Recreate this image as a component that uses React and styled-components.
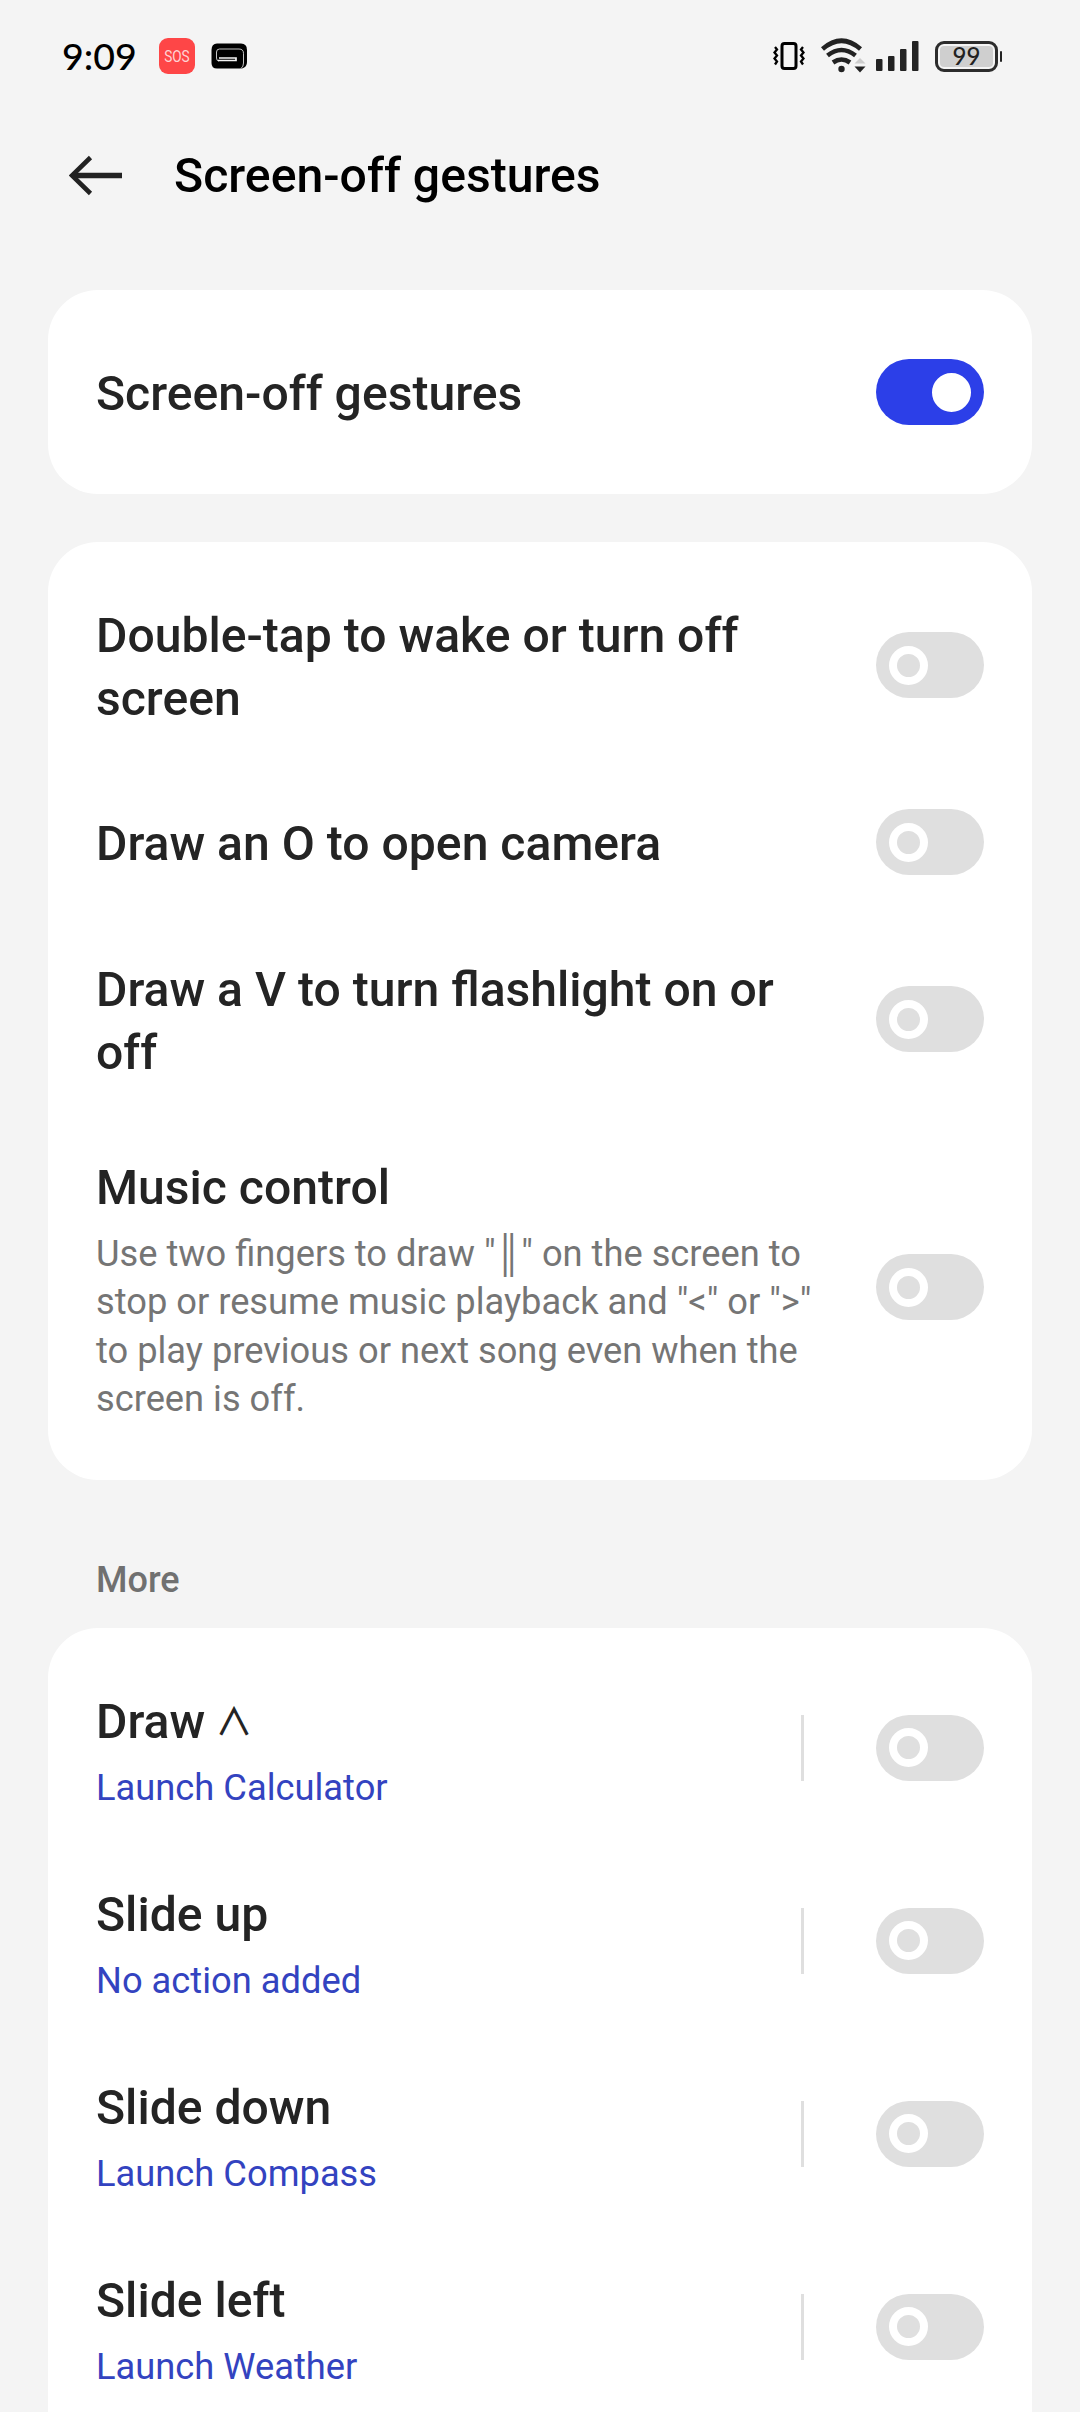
import React, { useState } from "react";
import styled, { createGlobalStyle } from "styled-components";

const GlobalStyle = createGlobalStyle`
  body {
    margin: 0;
    background-color: #f4f4f4;
    font-family: Roboto, "Noto Sans", sans-serif;
  }
`;

const Screen = styled.div`
  display: flex;
  flex-direction: column;
  width: 1080px;
  height: 2412px;
  overflow: hidden;
  background-color: #f4f4f4;
`;

const StatusBar = styled.div`
  display: flex;
  align-items: center;
  flex-shrink: 0;
  box-sizing: border-box;
  height: 112px;
  padding: 0 78px 0 62px;
`;

const Clock = styled.div`
  width: 97px;
  margin-top: -2px;
  font-family: Lato, sans-serif;
  font-size: 37.5px;
  font-weight: 500;
  color: #000;
`;

const SosBadge = styled.div`
  display: flex;
  align-items: center;
  justify-content: center;
  width: 36px;
  height: 36px;
  margin-right: 16px;
  border-radius: 9px;
  background-color: #fe4647;
`;

const SosText = styled.span`
  font-size: 17px;
  color: #ffd4d4;
  transform: scaleX(0.8);
`;

const StatusIcons = styled.div`
  display: flex;
  align-items: center;
  margin-left: auto;
`;

const Header = styled.header`
  display: flex;
  align-items: center;
  flex-shrink: 0;
  height: 127px;
  padding-left: 69px;
  margin-bottom: 51px;
`;

const BackButton = styled.button`
  display: flex;
  width: 105px;
  padding: 0;
  border: none;
  background: none;
  cursor: pointer;
`;

const PageTitle = styled.h1`
  margin: 0;
  font-size: 48.15px;
  font-weight: 500;
  color: #000;
`;

const Card = styled.section`
  box-sizing: border-box;
  flex-shrink: 0;
  margin: 0 48px 48px;
  padding: ${(props) => props.$padding};
  border-radius: 50px;
  background-color: #fff;
`;

const SectionLabel = styled.h2`
  flex-shrink: 0;
  margin: 31px 96px 26px;
  font-size: 36px;
  font-weight: 500;
  line-height: 43px;
  color: #707070;
`;

const Row = styled.div`
  display: flex;
  align-items: center;
  box-sizing: border-box;
  height: ${(props) => props.$height}px;
  padding: 0 48px;
`;

const RowText = styled.div`
  width: ${(props) => (props.$wide ? 730 : 700)}px;
  padding-top: ${(props) => props.$top || 4}px;
`;

const RowTitle = styled.div`
  font-size: 48.1px;
  font-weight: 500;
  line-height: 63px;
  color: #242424;
`;

const RowDescription = styled.div`
  margin-top: 11px;
  font-size: 36.25px;
  line-height: 48.3px;
  color: #757575;
`;

const RowAction = styled.div`
  margin-top: 11px;
  font-size: 36.3px;
  line-height: 48px;
  color: #3343c0;
`;

const GestureSign = styled.span`
  margin-left: -2px;
  font-family: "Noto Sans CJK SC", sans-serif;
  font-size: 37.5px;
  font-weight: 500;
  line-height: 1;
  vertical-align: 3px;
`;

const Divider = styled.div`
  width: 3px;
  height: 66px;
  margin-left: auto;
  margin-right: 72px;
  background-color: #dfdfdf;
`;

const Track = styled.button`
  display: flex;
  align-items: center;
  justify-content: ${(props) => (props.$on ? "flex-end" : "flex-start")};
  box-sizing: border-box;
  flex-shrink: 0;
  width: 108px;
  height: 66px;
  margin-left: ${(props) => (props.$afterDivider ? "0" : "auto")};
  padding: 0 13px;
  border: none;
  border-radius: 33px;
  background-color: ${(props) => (props.$on ? "#2c3fe8" : "#dfdfdf")};
  cursor: pointer;
`;

const Thumb = styled.span`
  box-sizing: border-box;
  width: 39px;
  height: 39px;
  border: 8px solid #fff;
  border-radius: 50%;
  background-color: ${(props) => (props.$on ? "#fff" : "#dfdfdf")};
`;

const toggles = [
  { id: "wake", title: "Double-tap to wake or turn off screen", height: 208 },
  { id: "camera", title: "Draw an O to open camera", height: 146, top: 3 },
  { id: "flashlight", title: "Draw a V to turn flashlight on or off", height: 208 },
  {
    id: "music",
    title: "Music control",
    description:
      'Use two fingers to draw "║" on the screen to stop or resume music playback and "<" or ">" to play previous or next song even when the screen is off.',
    height: 328,
    top: 5,
  },
];

const gestures = [
  { id: "draw", title: "Draw", sign: "∧", action: "Launch Calculator" },
  { id: "up", title: "Slide up", action: "No action added" },
  { id: "down", title: "Slide down", action: "Launch Compass" },
  { id: "left", title: "Slide left", action: "Launch Weather" },
];

const BackIcon = () => (
  <svg width="54" height="42" viewBox="0 0 54 42" fill="none" stroke="#222">
    <path d="M3 20.500 H53" strokeWidth="5.400" />
    <path d="M21.500 2.500 L3 20.500 L21.500 38.500" strokeWidth="4.600" />
  </svg>
);

const GameIcon = () => (
  <svg width="37" height="26" viewBox="0 0 37 26" fill="none" stroke="#f4f4f4">
    <path
      d="M6 0.500 H30 Q36 0.500 36 7 V19 Q36 24 31 25.500 H6 Q0.500 25.500 0.500 20 V7 Q0.500 0.500 6 0.500 Z"
      fill="#000"
      stroke="none"
    />
    <path
      d="M30 25.500 Q32.500 23.500 32.500 20 V10.500 Q32.500 6 28 6 H8.500 Q5.500 6 5.500 9 V15 Q5.500 18 8 18"
      strokeWidth="1"
      opacity="0.8"
    />
    <path d="M7 17.500 H25 V15 H8" strokeWidth="1.700" />
  </svg>
);

const VibrateSvg = styled.svg`
  margin-right: 16px;
`;

const VibrateIcon = () => (
  <VibrateSvg width="32" height="30" viewBox="0 0 32 30" fill="none" stroke="#000">
    <rect x="9" y="2.500" width="14" height="25" rx="2.500" strokeWidth="3" />
    <path
      d="M2 6 L4 8.500 L1.500 11.500 L4 14.500 L1.500 17.500 L4 20.500 L2 23.500"
      strokeWidth="2.300"
    />
    <path
      d="M30 6 L28 8.500 L30.500 11.500 L28 14.500 L30.500 17.500 L28 20.500 L30 23.500"
      strokeWidth="2.300"
    />
  </VibrateSvg>
);

const WifiSvg = styled.svg`
  margin-right: 9px;
`;

const WifiIcon = () => (
  <WifiSvg width="46" height="36" viewBox="0 0 46 36" fill="none">
    <g stroke="#222" strokeWidth="4.600">
      <path d="M1.500 11 Q20.500 -5.500 39.500 11" />
      <path d="M6.500 17.500 Q20.500 6.500 34.500 17.500" />
      <path d="M12 24.500 Q20.500 18.500 29 24.500" />
    </g>
    <circle cx="20.500" cy="31" r="3.200" fill="#222" />
    <path d="M33.500 25.500 L39 20 L44.500 25.500 Z" fill="#ccc" />
    <path d="M33.500 28.500 H44.500 L39 34.500 Z" fill="#222" />
  </WifiSvg>
);

const SignalIcon = () => (
  <svg width="43" height="32" viewBox="0 0 43 32" fill="#222">
    <rect x="0" y="19" width="6.500" height="12" rx="1" />
    <rect x="12" y="16" width="6.500" height="15" rx="1" />
    <rect x="24" y="9" width="6.500" height="22" rx="1" />
    <rect x="36" y="1" width="6.500" height="30" rx="1" />
  </svg>
);

const Battery = styled.div`
  display: flex;
  align-items: center;
  margin-left: 16px;
`;

const BatteryBody = styled.div`
  display: flex;
  box-sizing: border-box;
  width: 63px;
  height: 31px;
  padding: 2px;
  border: 3px solid #2c2c2c;
  border-radius: 9px;
`;

const BatteryLevel = styled.div`
  display: flex;
  align-items: center;
  justify-content: center;
  flex: 1;
  border-radius: 4px;
  background-color: #cfcfcf;
  font-family: Lato, sans-serif;
  font-size: 24px;
  font-weight: 500;
  line-height: 20px;
  color: #222;
`;

const BatteryTip = styled.div`
  width: 2px;
  height: 11px;
  margin-left: 2px;
  border-radius: 1px;
  background-color: #222;
`;

const Switch = ({ on, onToggle, afterDivider }) => (
  <Track
    type="button"
    role="switch"
    aria-checked={on}
    $on={on}
    $afterDivider={afterDivider}
    onClick={onToggle}
  >
    <Thumb $on={on} />
  </Track>
);

const App = () => {
  const [enabled, setEnabled] = useState({ main: true });

  const toggleHandler = (id) => {
    setEnabled({ ...enabled, [id]: !enabled[id] });
  };

  return (
    <>
      <GlobalStyle />
      <Screen>
        <StatusBar>
          <Clock>9:09</Clock>
          <SosBadge>
            <SosText>SOS</SosText>
          </SosBadge>
          <GameIcon />
          <StatusIcons>
            <VibrateIcon />
            <WifiIcon />
            <SignalIcon />
            <Battery>
              <BatteryBody>
                <BatteryLevel>99</BatteryLevel>
              </BatteryBody>
              <BatteryTip />
            </Battery>
          </StatusIcons>
        </StatusBar>

        <Header>
          <BackButton type="button" aria-label="Back">
            <BackIcon />
          </BackButton>
          <PageTitle>Screen-off gestures</PageTitle>
        </Header>

        <Card $padding="29px 0">
          <Row $height={146}>
            <RowText $top={3}>
              <RowTitle>Screen-off gestures</RowTitle>
            </RowText>
            <Switch on={!!enabled.main} onToggle={() => toggleHandler("main")} />
          </Row>
        </Card>

        <Card $padding="19px 0 29px">
          {toggles.map((item) => (
            <Row key={item.id} $height={item.height}>
              <RowText $wide={!!item.description} $top={item.top}>
                <RowTitle>{item.title}</RowTitle>
                {item.description && (
                  <RowDescription>{item.description}</RowDescription>
                )}
              </RowText>
              <Switch
                on={!!enabled[item.id]}
                onToggle={() => toggleHandler(item.id)}
              />
            </Row>
          ))}
        </Card>

        <SectionLabel>More</SectionLabel>

        {/* the list runs on past the bottom edge of the screen */}
        <Card $padding="23px 0 120px">
          {gestures.map((item) => (
            <Row key={item.id} $height={193}>
              <RowText $top={7}>
                <RowTitle>
                  {item.title} {item.sign && <GestureSign>{item.sign}</GestureSign>}
                </RowTitle>
                <RowAction>{item.action}</RowAction>
              </RowText>
              <Divider />
              <Switch
                afterDivider
                on={!!enabled[item.id]}
                onToggle={() => toggleHandler(item.id)}
              />
            </Row>
          ))}
        </Card>
      </Screen>
    </>
  );
};

export default App;
